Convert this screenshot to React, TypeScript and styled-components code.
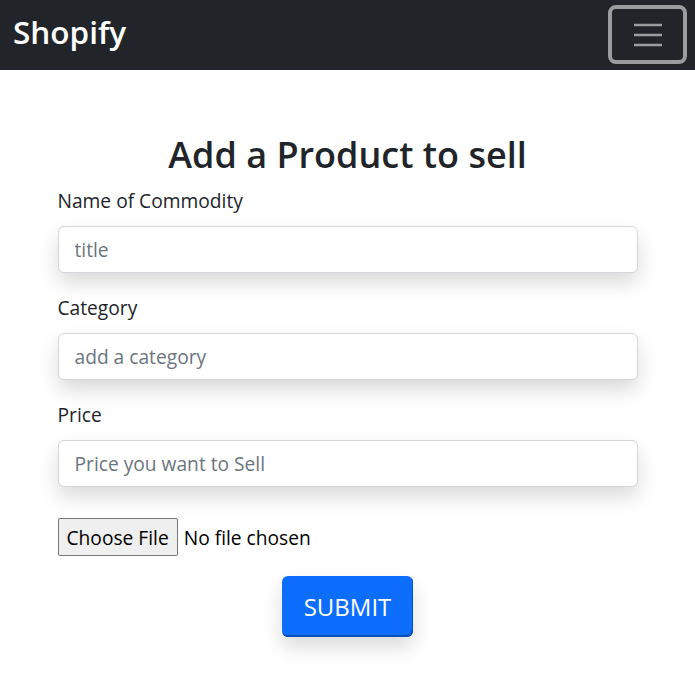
import React from "react";
import styled, { createGlobalStyle } from "styled-components";

const GlobalStyle = createGlobalStyle`
  html, body {
    margin: 0;
    padding: 0;
    background: #ffffff;
  }
  body {
    font-family: "Open Sans", "Noto Sans", sans-serif;
    color: #212529;
  }
  * { box-sizing: border-box; }
`;

const Navbar = styled.nav`
  height: 70px;
  background: #212529;
  display: flex;
  align-items: center;
  justify-content: space-between;
  padding: 0 8px 0 13px;
`;

const Brand = styled.a`
  color: #ffffff;
  font-size: 31.5px;
  font-weight: 600;
  text-decoration: none;
  line-height: 1;
  margin-top: -6px;
`;

const Toggler = styled.button`
  width: 79px;
  height: 59px;
  margin-top: -1px;
  border: 4px solid #9b9c9d;
  border-radius: 8px;
  background: transparent;
  display: flex;
  align-items: center;
  justify-content: center;
  padding: 0;
  cursor: pointer;
`;

const Main = styled.main`
  width: 580px;
  margin: 0 auto;
  padding: 62px 0 40px;
`;

const Title = styled.h1`
  margin: 0 0 8px;
  text-align: center;
  font-size: 36px;
  font-weight: 600;
  line-height: 46px;
  color: #212529;
`;

const Field = styled.div`
  margin-bottom: 20px;
`;

const Label = styled.label`
  display: block;
  font-size: 19.2px;
  line-height: 30px;
  margin-bottom: 10px;
  color: #212529;
`;

const Input = styled.input`
  display: block;
  width: 100%;
  height: 47px;
  padding: 0 16px;
  font-family: inherit;
  font-size: 19.2px;
  color: #212529;
  background: #ffffff;
  border: 1px solid #d3d6da;
  border-radius: 6px;
  box-shadow: 0 10px 20px rgba(0, 0, 0, 0.15);
  outline: none;
  &::placeholder {
    color: #6c757d;
  }
`;

const FileRow = styled.div`
  display: flex;
  align-items: center;
  margin: 31px 0 20px;
  font-size: 19.2px;
`;

const FileButton = styled.label`
  height: 38px;
  padding: 0 8px;
  display: flex;
  align-items: center;
  background: #efefef;
  border: 1px solid #767676;
  border-radius: 2px;
  color: #000000;
  margin-right: 6px;
  cursor: pointer;
`;

const FileText = styled.span`
  color: #000000;
`;

const HiddenFile = styled.input`
  display: none;
`;

const Actions = styled.div`
  display: flex;
  justify-content: center;
`;

const Submit = styled.button`
  height: 61px;
  padding: 0 22px;
  font-family: inherit;
  font-size: 24px;
  color: #ffffff;
  background: #0d6efd;
  border: none;
  border-radius: 6px;
  box-shadow: inset -1px -2px 0 #0a4fb8, 0 10px 20px rgba(0, 0, 0, 0.15);
  cursor: pointer;
`;

const MenuIcon = () => (
  <svg width="38" height="38" viewBox="0 0 38 38" aria-hidden="true">
    <g stroke="#9b9c9d" strokeWidth="2.5" strokeLinecap="butt">
      <line x1="5" y1="9" x2="33" y2="9" />
      <line x1="5" y1="19" x2="33" y2="19" />
      <line x1="5" y1="29" x2="33" y2="29" />
    </g>
  </svg>
);

export default function App() {
  return (
    <>
      <GlobalStyle />
      <Navbar>
        <Brand href="#">Shopify</Brand>
        <Toggler aria-label="Toggle navigation">
          <MenuIcon />
        </Toggler>
      </Navbar>
      <Main>
        <Title>Add a Product to sell</Title>
        <form onSubmit={(e) => e.preventDefault()}>
          <Field>
            <Label htmlFor="title">Name of Commodity</Label>
            <Input id="title" placeholder="title" />
          </Field>
          <Field>
            <Label htmlFor="category">Category</Label>
            <Input id="category" placeholder="add a category" />
          </Field>
          <Field>
            <Label htmlFor="price">Price</Label>
            <Input id="price" placeholder="Price you want to Sell" />
          </Field>
          <FileRow>
            <FileButton htmlFor="file">Choose File</FileButton>
            <FileText>No file chosen</FileText>
            <HiddenFile id="file" type="file" />
          </FileRow>
          <Actions>
            <Submit type="submit">SUBMIT</Submit>
          </Actions>
        </form>
      </Main>
    </>
  );
}
